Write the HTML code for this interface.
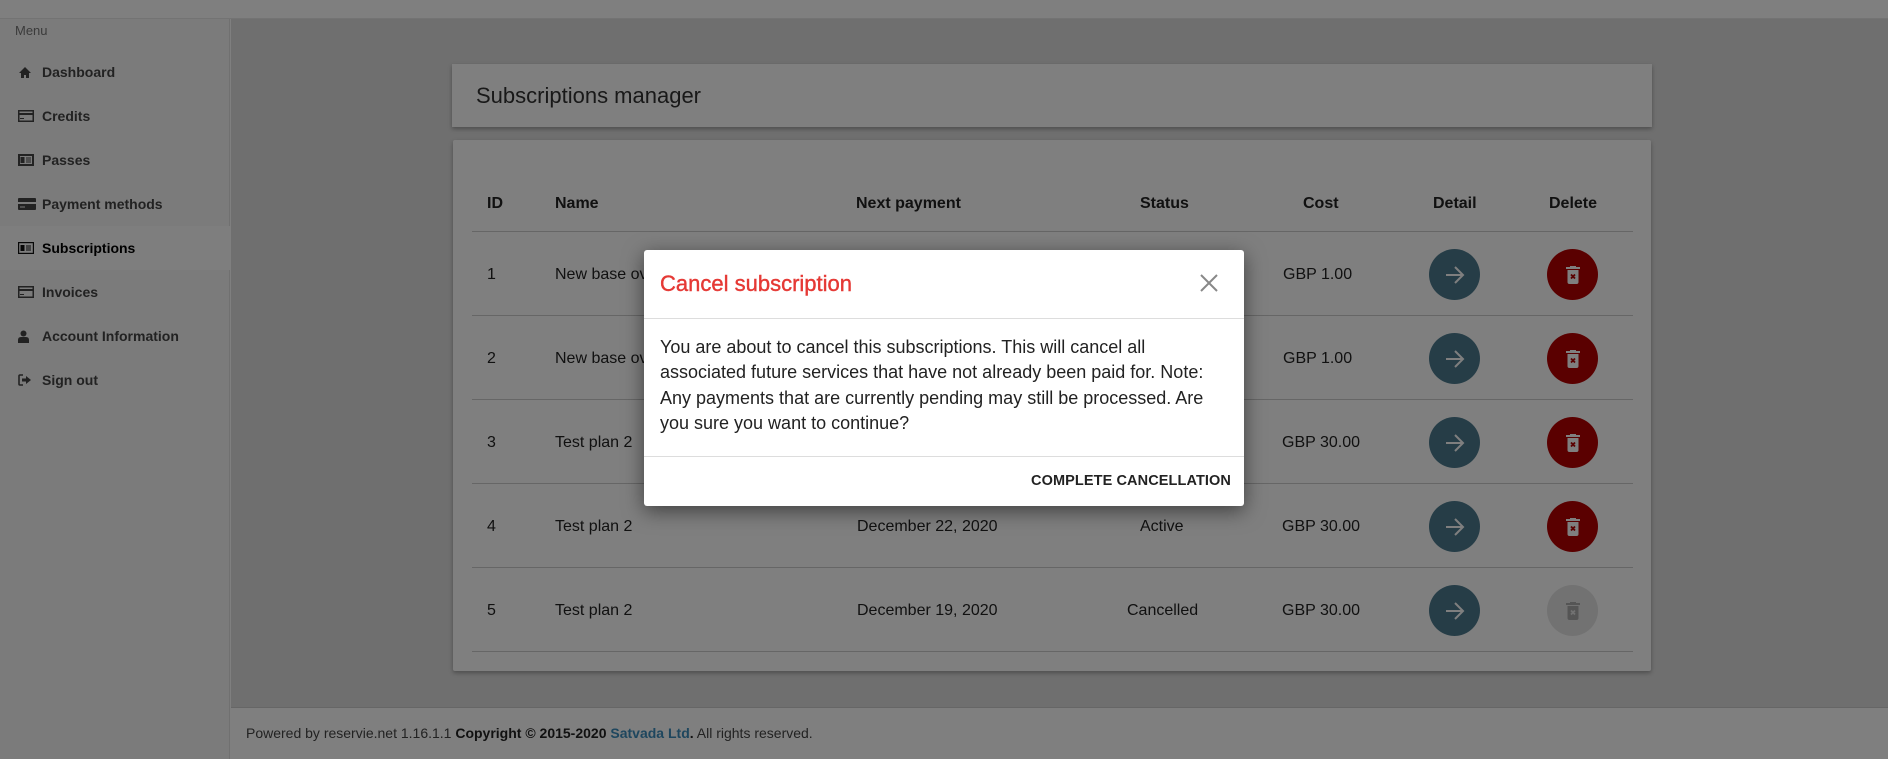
<!DOCTYPE html>
<html><head><meta charset="utf-8"><style>
*{box-sizing:border-box;margin:0;padding:0}
body{width:1888px;height:759px;overflow:hidden;position:relative;background:#fff;font-family:"Liberation Sans",sans-serif;color:#333}
.top{position:absolute;left:0;top:0;width:1888px;height:19px;background:#fff;border-bottom:1px solid #e6e6e6}
.side{position:absolute;left:0;top:19px;width:230px;height:740px;background:#f6f6f6;border-right:1px solid #e0e0e0}
.side .menu{position:absolute;left:15px;top:4px;font-size:13px;color:#777}
.item{position:absolute;left:0;width:230px;height:44px;display:flex;align-items:center;font-size:14px;font-weight:bold;color:#444}
.item.act{background:#fdfdfd;color:#000}
.item svg{position:absolute;left:18px}
.item span{position:absolute;left:42px}
.main{position:absolute;left:231px;top:19px;width:1657px;height:688px;background:#dedede}
.card{position:absolute;background:#fff;box-shadow:0 2px 4px rgba(0,0,0,.3)}
.h{left:452px;top:64px;width:1200px;height:63px}
.h div{position:absolute;left:24px;top:19px;font-size:22px;color:#333}
.t{left:453px;top:140px;width:1198px;height:531px;border-radius:2px}
.th{position:absolute;font-size:16px;font-weight:bold;color:#222;top:194px}
.td{position:absolute;font-size:16px;color:#222}
.line{position:absolute;left:472px;width:1161px;height:1px;background:#ccc}
.btn{position:absolute;width:51px;height:51px;border-radius:50%;display:flex;align-items:center;justify-content:center}
.foot{position:absolute;left:231px;top:707px;width:1657px;height:50px;background:#fff;border-top:1px solid #ccc;font-size:14px;color:#444;padding:17px 15px}
.foot b{color:#222}.foot a{color:#3c8dbc;font-weight:bold;text-decoration:none}
.ov{position:absolute;left:0;top:0;width:1888px;height:759px;background:rgba(0,0,0,.5)}
.modal{position:absolute;left:644px;top:250px;width:600px;height:256px;background:#fff;border-radius:3px;box-shadow:0 5px 20px rgba(0,0,0,.5)}
.mt{position:absolute;left:16px;top:21px;font-size:22px;color:#e53935;-webkit-text-stroke:.4px #e53935}
.mx{position:absolute;left:556px;top:24px}
.mh{position:absolute;left:0;top:68px;width:600px;height:1px;background:#ddd}
.mb{position:absolute;left:16px;top:85px;width:570px;font-size:18px;line-height:25.3px;color:#222}
.mf{position:absolute;left:0;top:206px;width:600px;height:1px;background:#ddd}
.mbtn{position:absolute;right:13px;top:223px;font-size:14.5px;letter-spacing:.1px;color:#222;font-weight:bold}
</style></head><body>
<div class="top"></div>
<div class="side">
<div class="menu">Menu</div>
<div class="item" style="top:31px"><svg width="14" height="13" viewBox="0 0 14 13"><path d="M7 1L1 7h2v5h3V9h2v3h3V7h2z" fill="#444"/></svg><span>Dashboard</span></div>
<div class="item" style="top:75px"><svg width="16" height="12" viewBox="0 0 16 12"><rect x=".75" y=".75" width="14.5" height="10.5" fill="none" stroke="#444" stroke-width="1.5"/><rect x="1" y="3" width="14" height="2" fill="#444"/><rect x="2" y="8" width="4" height="1" fill="#444"/></svg><span>Credits</span></div>
<div class="item" style="top:119px"><svg width="16" height="12" viewBox="0 0 16 12"><rect x="0" y="0" width="16" height="12" fill="#444"/><rect x="2" y="2" width="12" height="8" fill="#f6f6f6"/><rect x="2.5" y="3" width="4" height="6" fill="#444"/><rect x="8" y="3.5" width="5" height="1" fill="#444"/><rect x="8" y="5.5" width="5" height="1" fill="#444"/><rect x="8" y="7.5" width="5" height="1" fill="#444"/></svg><span>Passes</span></div>
<div class="item" style="top:163px"><svg width="18" height="12" viewBox="0 0 18 12"><rect x="0" y="0" width="18" height="12" rx="1" fill="#444"/><rect x="0" y="4" width="18" height="2" fill="#f6f6f6"/><rect x="2" y="8.5" width="5" height="1" fill="#f6f6f6"/></svg><span>Payment methods</span></div>
<div class="item act" style="top:207px"><svg width="16" height="12" viewBox="0 0 16 12"><rect x=".6" y=".6" width="14.8" height="10.8" fill="none" stroke="#111" stroke-width="1.2"/><rect x="2.5" y="3" width="4" height="6" fill="#111"/><rect x="8" y="3.5" width="5" height="1" fill="#111"/><rect x="8" y="5.5" width="5" height="1" fill="#111"/><rect x="8" y="7.5" width="5" height="1" fill="#111"/></svg><span>Subscriptions</span></div>
<div class="item" style="top:251px"><svg width="16" height="12" viewBox="0 0 16 12"><rect x=".75" y=".75" width="14.5" height="10.5" fill="none" stroke="#444" stroke-width="1.5"/><rect x="1" y="3" width="14" height="2" fill="#444"/><rect x="2" y="8" width="4" height="1" fill="#444"/></svg><span>Invoices</span></div>
<div class="item" style="top:295px"><svg width="11" height="13" viewBox="0 0 11 13"><circle cx="5.5" cy="3.5" r="3" fill="#444"/><path d="M0 13V10q0-3 3-3h5q3 0 3 3v3z" fill="#444"/></svg><span>Account Information</span></div>
<div class="item" style="top:339px"><svg width="13" height="12" viewBox="0 0 13 12"><path d="M5 1H2Q1 1 1 2v8q0 1 1 1h3" fill="none" stroke="#444" stroke-width="1.6"/><path d="M4 4.5h4V2l5 4-5 4V7.5H4z" fill="#444"/></svg><span>Sign out</span></div>
</div>
<div class="main"></div>
<div class="card h"><div>Subscriptions manager</div></div>
<div class="card t"></div>
<div class="th" style="left:487px;top:195px">ID</div>
<div class="th" style="left:555px;top:195px">Name</div>
<div class="th" style="left:856px;top:195px">Next payment</div>
<div class="th" style="left:1140px;top:195px">Status</div>
<div class="th" style="left:1303px;top:195px">Cost</div>
<div class="th" style="left:1433px;top:195px">Detail</div>
<div class="th" style="left:1549px;top:195px">Delete</div>
<div class="line" style="top:231px"></div>
<div class="line" style="top:315px"></div>
<div class="line" style="top:399px"></div>
<div class="line" style="top:483px"></div>
<div class="line" style="top:567px"></div>
<div class="line" style="top:651px"></div>

<div class="td" style="left:487px;top:266px">1</div><div class="td" style="left:555px;top:266px">New base ov</div><div class="td" style="left:1283px;top:266px">GBP 1.00</div>
<div class="td" style="left:487px;top:350px">2</div><div class="td" style="left:555px;top:350px">New base ov</div><div class="td" style="left:1283px;top:350px">GBP 1.00</div>
<div class="td" style="left:487px;top:434px">3</div><div class="td" style="left:555px;top:434px">Test plan 2</div><div class="td" style="left:1282px;top:434px">GBP 30.00</div>
<div class="td" style="left:487px;top:518px">4</div><div class="td" style="left:555px;top:518px">Test plan 2</div><div class="td" style="left:857px;top:518px">December 22, 2020</div><div class="td" style="left:1140px;top:518px">Active</div><div class="td" style="left:1282px;top:518px">GBP 30.00</div>
<div class="td" style="left:487px;top:602px">5</div><div class="td" style="left:555px;top:602px">Test plan 2</div><div class="td" style="left:857px;top:602px">December 19, 2020</div><div class="td" style="left:1127px;top:602px">Cancelled</div><div class="td" style="left:1282px;top:602px">GBP 30.00</div>

<div class="btn" style="left:1429px;top:249px;background:#4d7b8f"><svg width="22" height="20" viewBox="0 0 22 20"><path d="M2 10h17M11 2l8 8-8 8" fill="none" stroke="#fff" stroke-width="2"/></svg></div>
<div class="btn" style="left:1429px;top:333px;background:#4d7b8f"><svg width="22" height="20" viewBox="0 0 22 20"><path d="M2 10h17M11 2l8 8-8 8" fill="none" stroke="#fff" stroke-width="2"/></svg></div>
<div class="btn" style="left:1429px;top:417px;background:#4d7b8f"><svg width="22" height="20" viewBox="0 0 22 20"><path d="M2 10h17M11 2l8 8-8 8" fill="none" stroke="#fff" stroke-width="2"/></svg></div>
<div class="btn" style="left:1429px;top:501px;background:#4d7b8f"><svg width="22" height="20" viewBox="0 0 22 20"><path d="M2 10h17M11 2l8 8-8 8" fill="none" stroke="#fff" stroke-width="2"/></svg></div>
<div class="btn" style="left:1429px;top:585px;background:#4d7b8f"><svg width="22" height="20" viewBox="0 0 22 20"><path d="M2 10h17M11 2l8 8-8 8" fill="none" stroke="#fff" stroke-width="2"/></svg></div>

<div class="btn" style="left:1547px;top:249px;background:#b40000"><svg width="14" height="18" viewBox="0 0 14 18"><rect x="0" y="1" width="14" height="2" fill="#fff"/><rect x="4" y="0" width="6" height="2" fill="#fff"/><path d="M1.5 4h11v12q0 2-2 2h-7q-2 0-2-2z" fill="#fff"/><path d="M5 8.5l4 4M9 8.5l-4 4" stroke="#b40000" stroke-width="1.8"/></svg></div>
<div class="btn" style="left:1547px;top:333px;background:#b40000"><svg width="14" height="18" viewBox="0 0 14 18"><rect x="0" y="1" width="14" height="2" fill="#fff"/><rect x="4" y="0" width="6" height="2" fill="#fff"/><path d="M1.5 4h11v12q0 2-2 2h-7q-2 0-2-2z" fill="#fff"/><path d="M5 8.5l4 4M9 8.5l-4 4" stroke="#b40000" stroke-width="1.8"/></svg></div>
<div class="btn" style="left:1547px;top:417px;background:#b40000"><svg width="14" height="18" viewBox="0 0 14 18"><rect x="0" y="1" width="14" height="2" fill="#fff"/><rect x="4" y="0" width="6" height="2" fill="#fff"/><path d="M1.5 4h11v12q0 2-2 2h-7q-2 0-2-2z" fill="#fff"/><path d="M5 8.5l4 4M9 8.5l-4 4" stroke="#b40000" stroke-width="1.8"/></svg></div>
<div class="btn" style="left:1547px;top:501px;background:#b40000"><svg width="14" height="18" viewBox="0 0 14 18"><rect x="0" y="1" width="14" height="2" fill="#fff"/><rect x="4" y="0" width="6" height="2" fill="#fff"/><path d="M1.5 4h11v12q0 2-2 2h-7q-2 0-2-2z" fill="#fff"/><path d="M5 8.5l4 4M9 8.5l-4 4" stroke="#b40000" stroke-width="1.8"/></svg></div>
<div class="btn" style="left:1547px;top:585px;background:#e4e4e4"><svg width="14" height="18" viewBox="0 0 14 18"><rect x="0" y="1" width="14" height="2" fill="#aaa"/><rect x="4" y="0" width="6" height="2" fill="#aaa"/><path d="M1.5 4h11v12q0 2-2 2h-7q-2 0-2-2z" fill="#aaa"/><path d="M5 8.5l4 4M9 8.5l-4 4" stroke="#e4e4e4" stroke-width="1.8"/></svg></div>

<div class="foot">Powered by reservie.net 1.16.1.1 <b>Copyright © 2015-2020 <a>Satvada Ltd</a>.</b> All rights reserved.</div>
<div class="ov"></div>
<div class="modal">
<div class="mt">Cancel subscription</div>
<svg class="mx" width="18" height="18" viewBox="0 0 18 18"><path d="M1 1l16 16M17 1L1 17" stroke="#888" stroke-width="2"/></svg>
<div class="mh"></div>
<div class="mb">You are about to cancel this subscriptions. This will cancel all associated future services that have not already been paid for. Note: Any payments that are currently pending may still be processed. Are you sure you want to continue?</div>
<div class="mf"></div>
<div class="mbtn">COMPLETE CANCELLATION</div>
</div>
</body></html>
